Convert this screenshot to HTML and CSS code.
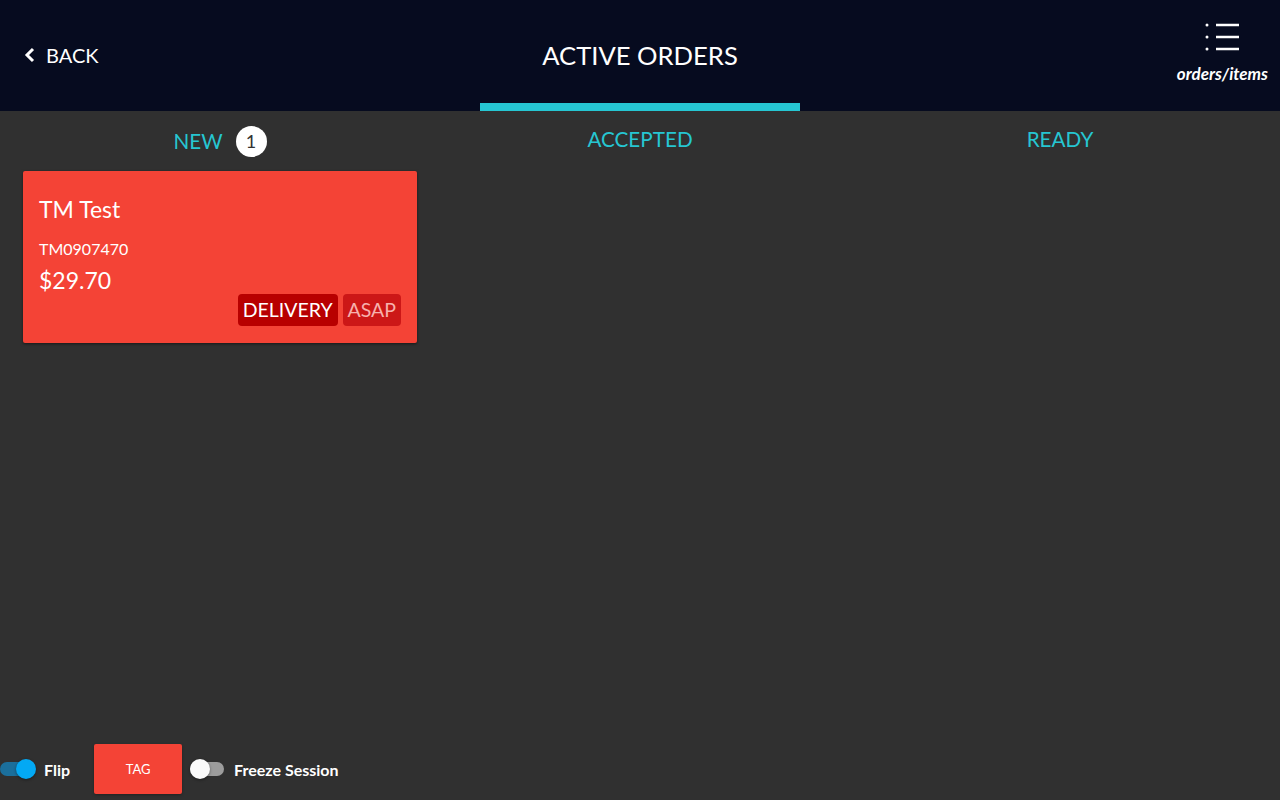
FILE: index.html
```html
<!DOCTYPE html>
<html lang="en">

<head>
  <meta charset="UTF-8">
  <meta name="viewport" content="width=device-width, initial-scale=1.0">
  <title>Active Orders</title>
  <link rel="stylesheet" href="styles.css">
</head>

<body>
  <div class="app">
    <header class="topbar">
      <div class="topbar-row">
        <a class="back" href="#">
          <svg width="12" height="16" viewBox="0 0 12 16">
            <path d="M9 2 L3 8 L9 14" fill="none" stroke="#fff" stroke-width="3" />
          </svg>
          BACK
        </a>
        <h1 class="title">ACTIVE ORDERS</h1>
        <div class="view-switch">
          <svg width="38" height="32" viewBox="0 0 38 32">
            <circle cx="3" cy="4" r="1.5" fill="#fff" />
            <circle cx="3" cy="16" r="1.5" fill="#fff" />
            <circle cx="3" cy="28" r="1.5" fill="#fff" />
            <path d="M12 4 H35 M12 16 H35 M12 28 H35" stroke="#fff" stroke-width="2.4" />
          </svg>
          <span>orders/items</span>
        </div>
      </div>
      <div class="tab-ink"></div>
    </header>

    <main class="board">
      <section class="column">
        <div class="column-head with-count">NEW <span class="count">1</span></div>
        <div class="order-card">
          <div class="order-name">TM Test</div>
          <div class="order-ref">TM0907470</div>
          <div class="order-foot">
            <div class="order-total">$29.70</div>
            <div class="tags">
              <span class="tag tag-type">DELIVERY</span>
              <span class="tag tag-time">ASAP</span>
            </div>
          </div>
        </div>
      </section>
      <section class="column">
        <div class="column-head">ACCEPTED</div>
      </section>
      <section class="column">
        <div class="column-head">READY</div>
      </section>
    </main>

    <footer class="controls">
      <label class="switch on"><span class="track"></span><span class="thumb"></span></label>
      <span class="switch-label">Flip</span>
      <button class="tag-btn">TAG</button>
      <label class="switch"><span class="track"></span><span class="thumb"></span></label>
      <span class="switch-label">Freeze Session</span>
    </footer>
  </div>
</body>

</html>
```

FILE: styles.css
```css
* {
  box-sizing: border-box;
}

body {
  margin: 0;
  background: #303030;
  font-family: Lato, "Open Sans", sans-serif;
  color: #fff;
}

.app {
  height: 800px;
  display: flex;
  flex-direction: column;
}

.topbar {
  background: #060b1f;
  height: 111px;
  display: flex;
  flex-direction: column;
}

.topbar-row {
  flex: 1;
  display: grid;
  grid-template-columns: 1fr auto 1fr;
  align-items: center;
  padding: 0 12px 0 24px;
}

.back {
  justify-self: start;
  display: flex;
  align-items: center;
  gap: 10px;
  color: #fff;
  text-decoration: none;
  font-size: 20px;
  margin-top: 6px;
}

.title {
  margin: 6px 0 0 -12px;
  font-size: 25.6px;
  font-weight: 400;
}

.view-switch {
  justify-self: end;
  display: flex;
  flex-direction: column;
  align-items: flex-end;
  margin-top: 2px;
}

.view-switch svg {
  margin-right: 26px;
  margin-bottom: 10px;
}

.view-switch span {
  font-size: 17px;
  font-style: italic;
  font-weight: 700;
}

.tab-ink {
  align-self: center;
  width: 320px;
  height: 8px;
  background: #26c6d2;
}

.board {
  flex: 1;
  display: grid;
  grid-template-columns: repeat(3, 400px);
  gap: 20px;
  padding: 0 20px;
}

.column-head {
  height: 60px;
  display: flex;
  align-items: center;
  justify-content: center;
  gap: 13px;
  color: #26c6d2;
  font-size: 20.7px;
  padding-bottom: 4px;
}

.column-head.with-count {
  padding: 0;
}

.count {
  width: 31px;
  height: 31px;
  border-radius: 50%;
  background: #fff;
  color: #333;
  font-size: 18px;
  display: flex;
  align-items: center;
  justify-content: center;
}

.order-card {
  margin: 0 3px;
  height: 172px;
  background: #f44336;
  border-radius: 2px;
  box-shadow: 0 1px 3px rgba(0, 0, 0, 0.5);
  padding: 24px 16px 16px;
  display: flex;
  flex-direction: column;
}

.order-name {
  font-size: 23px;
  line-height: 28px;
}

.order-ref {
  font-size: 16px;
  margin-top: 16px;
}

.order-foot {
  flex: 1;
  display: flex;
  justify-content: space-between;
  align-items: flex-start;
  margin-top: 8px;
}

.order-total {
  font-size: 23px;
}

.tags {
  align-self: flex-end;
  display: flex;
  gap: 5px;
  margin-bottom: 1px;
}

.tag {
  font-size: 19.5px;
  line-height: 24px;
  padding: 4px 5px;
  border-radius: 4px;
}

.tag-type {
  background: #b80000;
}

.tag-time {
  background: #cc1717;
  color: #f7b1ad;
}

.controls {
  height: 60px;
  display: flex;
  align-items: center;
  padding-bottom: 2px;
}

.switch {
  position: relative;
  width: 36px;
  height: 20px;
  display: flex;
  align-items: center;
}

.switch .track {
  width: 34px;
  height: 14px;
  border-radius: 7px;
  background: #9c9c9c;
}

.switch .thumb {
  position: absolute;
  left: 0;
  top: 0;
  width: 20px;
  height: 20px;
  border-radius: 50%;
  background: #fafafa;
  box-shadow: 0 1px 3px rgba(0, 0, 0, 0.4);
}

.switch.on .track {
  background: #1b6f9c;
}

.switch.on .thumb {
  left: 16px;
  background: #03a9f4;
}

.switch-label {
  font-size: 16px;
  font-weight: 700;
  margin-left: 8px;
}

.tag-btn {
  margin: 0 8px 0 24px;
  width: 88px;
  height: 50px;
  border: none;
  border-radius: 2px;
  background: #f44336;
  color: #fff;
  font-family: Lato, sans-serif;
  font-size: 13px;
  box-shadow: 0 1px 3px rgba(0, 0, 0, 0.3);
}
```
